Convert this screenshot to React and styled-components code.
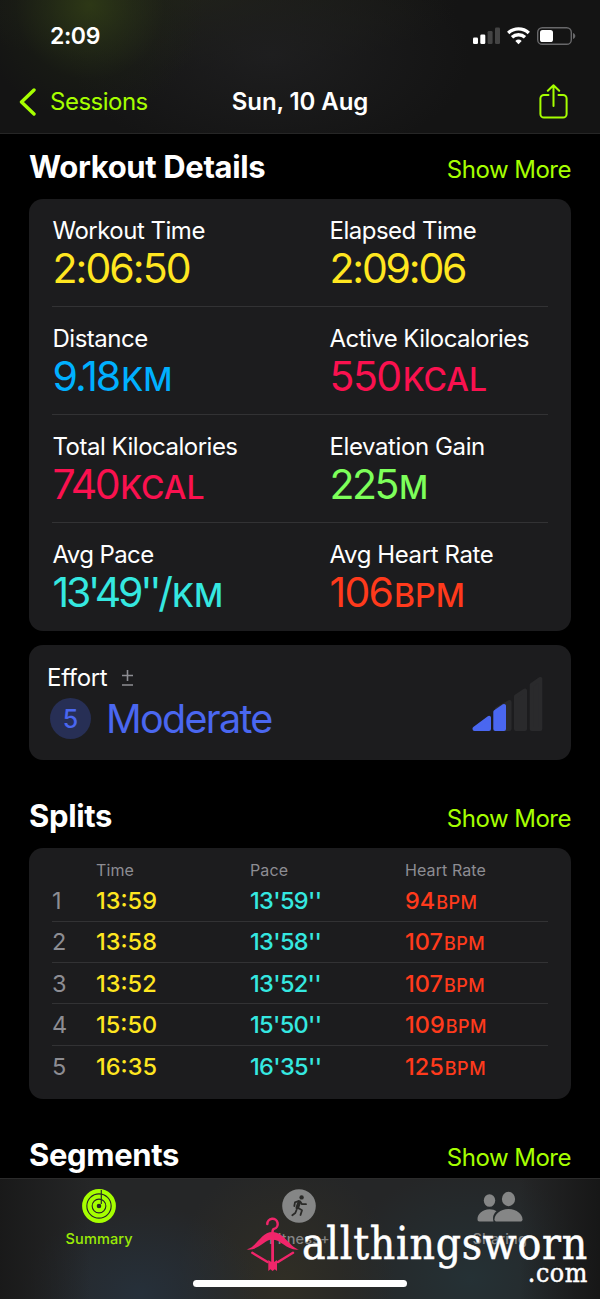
import React from "react";
import styled, { createGlobalStyle } from "styled-components";

const GlobalStyle = createGlobalStyle`
  * { box-sizing: border-box; }
  body {
    margin: 0;
    background: #000;
    font-family: Inter, "Liberation Sans", sans-serif;
    color: #fff;
  }
`;

const Screen = styled.div`
  width: 600px;
  height: 1299px;
  display: flex;
  flex-direction: column;
  overflow: hidden;
  background: #000;
`;

const TopBar = styled.header`
  height: 134px;
  flex: none;
  display: flex;
  flex-direction: column;
  border-bottom: 1px solid #262626;
  background:
    radial-gradient(circle at 90px 5px, rgba(46, 57, 22, 0.95), rgba(40, 50, 22, 0.6) 40px, rgba(30, 36, 20, 0.3) 75px, transparent 115px),
    radial-gradient(ellipse 200px 110px at 270px 55px, rgba(31, 31, 32, 0.9), transparent),
    radial-gradient(ellipse 260px 70px at 200px 0, rgba(34, 36, 24, 0.8), transparent),
    #141414;
`;

const StatusBar = styled.div`
  height: 72px;
  display: flex;
  align-items: center;
  justify-content: space-between;
  padding: 0 24px 0 50px;
`;

const Clock = styled.div`
  font-size: 23px;
  font-weight: 600;
  letter-spacing: -0.4px;
`;

const StatusIcons = styled.div`
  display: flex;
  align-items: center;
  gap: 7px;
`;

const NavBar = styled.nav`
  height: 59px;
  display: grid;
  grid-template-columns: 1fr auto 1fr;
  align-items: center;
  padding: 0 32px;
`;

const Back = styled.div`
  display: flex;
  align-items: center;
  gap: 13px;
  margin-left: -14px;
  color: #a6ff00;
  font-size: 24px;
  letter-spacing: -0.5px;
`;

const NavTitle = styled.div`
  font-size: 24px;
  font-weight: 600;
  letter-spacing: -0.1px;
`;

const Share = styled.div`
  justify-self: end;
  display: flex;
`;

const Content = styled.main`
  flex: 1;
  overflow: hidden;
  padding: 0 29px;
`;

const SectionHead = styled.div`
  height: ${(p) => p.$height}px;
  display: flex;
  align-items: baseline;
  justify-content: space-between;
  padding-top: ${(p) => p.$top}px;
`;

const Heading = styled.h2`
  margin: 0;
  font-size: 31px;
  line-height: 36px;
  font-weight: 700;
  letter-spacing: -0.35px;
`;

const ShowMore = styled.div`
  color: #a6ff00;
  font-size: 24px;
  line-height: 36px;
  letter-spacing: -0.5px;
`;

const Card = styled.section`
  background: #1c1c1e;
  border-radius: 14px;
  padding: ${(p) => p.$pad || "0 23px"};
`;

const MetricRow = styled.div`
  height: 108px;
  display: grid;
  grid-template-columns: 277px 1fr;
  padding-top: 18px;
  border-bottom: 1px solid ${(p) => (p.$last ? "transparent" : "#323234")};
`;

const Metric = styled.div`
  padding-left: 0.5px;
  white-space: nowrap;
`;

const Label = styled.div`
  font-size: 24px;
  line-height: 28px;
  letter-spacing: ${(p) => p.$ls || -0.5}px;
`;

const Value = styled.div`
  font-size: 41px;
  line-height: 46px;
  color: ${(p) => p.$color};
  letter-spacing: ${(p) => p.$ls || -1.8}px;
`;

const Unit = styled.span`
  margin-left: 2px;
  font-size: 32px;
  font-weight: 450;
  letter-spacing: 0;
`;

const SmallUnit = styled.span`
  margin-left: 1px;
  font-size: 18px;
  letter-spacing: 0.5px;
`;

const EffortCard = styled(Card)`
  height: 115px;
  margin-top: 14.5px;
  display: flex;
  justify-content: space-between;
  padding: 18px 28px 0 18px;
`;

const EffortLabel = styled.div`
  display: flex;
  align-items: center;
  gap: 14px;
  font-size: 24px;
  line-height: 30px;
  letter-spacing: -0.3px;
`;

const EffortValue = styled.div`
  display: flex;
  align-items: center;
  gap: 15px;
  height: 51px;
  padding-left: 3px;
  color: #4a67f0;
  font-size: 39.5px;
  letter-spacing: -1.7px;
`;

const Badge = styled.div`
  width: 41px;
  height: 41px;
  border-radius: 50%;
  background: #272f55;
  display: grid;
  place-items: center;
  font-size: 25px;
  font-weight: 500;
  letter-spacing: 0;
`;

const EffortChart = styled.div`
  padding-top: 14px;
`;

const SplitRow = styled.div`
  height: ${(p) => (p.$head ? 32.5 : 41.3)}px;
  display: grid;
  grid-template-columns: 44px 154px 155px 1fr;
  align-items: ${(p) => (p.$head ? "end" : "center")};
  padding-bottom: ${(p) => (p.$head ? 1 : 0)}px;
  border-bottom: ${(p) => (p.$line ? "1px solid #323234" : "none")};
  font-size: ${(p) => (p.$head ? 16 : 23.5)}px;
  letter-spacing: ${(p) => (p.$head ? 0.1 : 0)}px;
  color: #8d8d93;
  white-space: nowrap;
`;

const Cell = styled.div`
  color: ${(p) => p.$color || "inherit"};
  font-weight: ${(p) => (p.$color ? 500 : 400)};
  letter-spacing: ${(p) => p.$ls || 0}px;
`;

const TabBar = styled.footer`
  height: 121px;
  flex: none;
  position: relative;
  border-top: 1px solid #2b2b2b;
  background:
    linear-gradient(90deg, rgba(24, 24, 24, 0.9), transparent 90px, transparent 520px, rgba(22, 22, 22, 0.95)),
    radial-gradient(ellipse 120px 90px at 140px 115px, #26303a, transparent),
    radial-gradient(ellipse 110px 120px at 285px 100px, #302e25, transparent),
    radial-gradient(ellipse 130px 110px at 470px 100px, #253135, transparent),
    #252627;
`;

const Tabs = styled.div`
  display: grid;
  grid-template-columns: repeat(3, 1fr);
  padding-top: 10px;
  margin-left: -1px;
`;

const Tab = styled.div`
  display: flex;
  flex-direction: column;
  align-items: center;
  gap: 7px;
  color: ${(p) => (p.$active ? "#9bea06" : "#858686")};
  font-size: 14.5px;
  line-height: 18px;
  font-weight: 500;
  letter-spacing: 0.15px;
  svg { height: 34px; }
`;

const HomeIndicator = styled.div`
  position: absolute;
  left: 193px;
  bottom: 12px;
  width: 214px;
  height: 7px;
  border-radius: 4px;
  background: #fff;
`;

// sits over the tab labels
const Watermark = styled.div`
  position: absolute;
  left: 246px;
  top: 38px;
  width: 342px;
  display: flex;
  font-family: "DejaVu Serif Condensed", "DejaVu Serif", serif;
  font-stretch: condensed;
  -webkit-text-stroke: 0.5px #fff;
`;

const Brand = styled.div`
  flex: 1;
  display: flex;
  flex-direction: column;
  align-items: flex-end;
`;

const BrandName = styled.div`
  font-size: 44px;
  line-height: 54px;
  height: 41px;
  letter-spacing: 0.75px;
`;

const BrandDomain = styled.div`
  font-size: 26.5px;
  line-height: 30px;
  letter-spacing: 0.6px;
`;

const metrics = [
  [
    { label: "Workout Time", value: "2:06:50", color: "#ffe620", ls: -1.95 },
    { label: "Elapsed Time", value: "2:09:06", color: "#ffe620", ls: -2.2 },
  ],
  [
    { label: "Distance", value: "9.18", unit: "KM", color: "#00b0ff", ls: -2 },
    { label: "Active Kilocalories", value: "550", unit: "KCAL", color: "#fa114f", ls: -1.5, labelLs: -0.55 },
  ],
  [
    { label: "Total Kilocalories", value: "740", unit: "KCAL", color: "#fa114f", ls: -2.5 },
    { label: "Elevation Gain", value: "225", unit: "M", color: "#7dff5a", ls: -2.5, labelLs: -0.4 },
  ],
  [
    { label: "Avg Pace", value: "13'49''/", unit: "KM", color: "#35e8e0", ls: -3.2, labelLs: -0.6 },
    { label: "Avg Heart Rate", value: "106", unit: "BPM", color: "#ff3a1c", labelLs: -0.4 },
  ],
];

const splits = [
  ["13:59", "13'59''", "94"],
  ["13:58", "13'58''", "107"],
  ["13:52", "13'52''", "107"],
  ["15:50", "15'50''", "109"],
  ["16:35", "16'35''", "125"],
];

function SignalIcon() {
  return (
    <svg width="27" height="18" viewBox="0 0 27 18">
      <rect x="0" y="10.5" width="5" height="6.5" rx="1.3" fill="#fff" />
      <rect x="7.3" y="7.5" width="5" height="9.5" rx="1.3" fill="#fff" />
      <rect x="14.6" y="4" width="5" height="13" rx="1.3" fill="#444" />
      <rect x="22" y="0.5" width="5" height="16.5" rx="1.3" fill="#444" />
    </svg>
  );
}

function WifiIcon() {
  return (
    <svg width="23" height="18" viewBox="0 0 23 18" fill="none" stroke="#fff" strokeWidth="3.4">
      <path d="M1.2 5.9a15.200 15.200 0 0 1 20.600 0" />
      <path d="M5 10.300a9.600 9.600 0 0 1 13 0" />
      <path d="M11.500 17.200l-3.200-3.300a4.700 4.700 0 0 1 6.400 0z" fill="#fff" stroke="none" />
    </svg>
  );
}

function BatteryIcon() {
  return (
    <svg width="39" height="18" viewBox="0 0 39 18">
      <rect x="0.7" y="0.7" width="33.6" height="16.6" rx="4.6" fill="none" stroke="#68686a" strokeWidth="1.4" />
      <rect x="3" y="3" width="13" height="12" rx="2.6" fill="#fff" />
      <path d="M36 6v6c1.500-.6 2.300-1.700 2.300-3s-.8-2.400-2.300-3z" fill="#68686a" />
    </svg>
  );
}

function ShareIcon() {
  return (
    <svg width="29" height="36" viewBox="0 0 29 36" fill="none" stroke="#a6ff00" strokeWidth="2" strokeLinecap="round" strokeLinejoin="round">
      <path d="M9.500 11H5a3.600 3.600 0 0 0-3.600 3.600v15.300A3.600 3.600 0 0 0 5 33.500h19a3.600 3.600 0 0 0 3.600-3.600V14.600a3.600 3.600 0 0 0-3.600-3.600h-4.500" />
      <path d="M14.500 22V1.200M8.800 6.700l5.700-5.500 5.700 5.500" />
    </svg>
  );
}

function EffortIcon() {
  return (
    <svg width="71" height="56" viewBox="0 0 71 56">
      <g fill="#2a2a2c" stroke="#2a2a2c" strokeWidth="4" strokeLinejoin="round">
        <path d="M25 32L37.500 25V52H25z" />
        <path d="M44 19.500l9-6V52h-9z" />
        <path d="M59.700 8l8.600-6V52h-8.600z" />
      </g>
      <g fill="#4a67f0" stroke="#4a67f0" strokeWidth="4" strokeLinejoin="round">
        <path d="M2.500 51.500L17 40.800V52H2.500z" />
        <path d="M23.300 35l8.700-6v23h-8.700z" />
      </g>
    </svg>
  );
}

function RingsIcon() {
  return (
    <svg width="34" height="34" viewBox="0 0 34 34" fill="none" stroke="#a6ff00" strokeWidth="4.200">
      <circle cx="17" cy="17" r="14.800" />
      <circle cx="17" cy="17" r="9.500" />
      <circle cx="17" cy="17" r="4.300" strokeWidth="4" />
      <path d="M19.300 1v14" stroke="#28302a" strokeWidth="1.200" />
    </svg>
  );
}

function RunnerIcon() {
  return (
    <svg width="34" height="34" viewBox="0 0 34 34" fill="none" stroke="#2a2a28" strokeLinecap="round" strokeLinejoin="round">
      <circle cx="17" cy="17" r="16.800" fill="#858686" stroke="none" />
      <circle cx="19.600" cy="8.400" r="2.200" fill="#2a2a28" stroke="none" />
      <path d="M17.300 13.200l-2 5.500" strokeWidth="3.600" />
      <path d="M16.500 12l-3.500 1.400-.7 3.600M18.200 12.500l1.800 2.700h4M15.800 18.800l4.200 2.400-1.500 4.800M14.500 21l-1.200 3-3 2.200" strokeWidth="1.800" />
    </svg>
  );
}

function PeopleIcon() {
  return (
    <svg width="46" height="34" viewBox="0 0 46 34" fill="#858686">
      <ellipse cx="12.500" cy="11.500" rx="5.700" ry="6.300" />
      <path d="M2.500 32.500C.8 32.500.5 31.500.5 30c0-4.500 4.500-9.700 12-9.700 3.200 0 5.300.8 7 2-2.600 2.200-4.200 5.200-3 10.200z" />
      <ellipse cx="31.500" cy="10" rx="6.600" ry="7.200" />
      <path d="M20 32.500c-1.700 0-2.500-.8-2.500-2.300 0-4.500 5.500-10.200 14-10.200s14 5.700 14 10.200c0 1.500-.8 2.300-2.500 2.300z" />
    </svg>
  );
}

function HangerIcon() {
  return (
    <svg width="54" height="55" viewBox="0 0 54 55" fill="none" stroke="#f0256a" strokeLinecap="round">
      <path d="M21.300 7a5.200 5.200 0 1 1 6.700 4.900c-1.300.4-1.500 1.300-1.500 3.600" strokeWidth="2.500" />
      <path d="M.5 32.500C11 30 15 15 26.500 15S43 30 53 32.500C41 34 35 22.500 26.500 22.500S12.500 34 .5 32.500z" fill="#f0256a" stroke="none" />
      <path d="M6.300 35.800L21.500 45M47 35.800L32 45" strokeWidth="2.400" />
      <path d="M26.600 22v24" strokeWidth="2.800" strokeLinecap="butt" />
      <path d="M22.300 43l3 2h2.700l3-2v11l-2.200-1.800-2.200 1.800-2.200-1.800-2.100 1.800z" fill="#f0256a" stroke="none" />
    </svg>
  );
}

function Section({ title, height, top }) {
  return (
    <SectionHead $height={height} $top={top}>
      <Heading>{title}</Heading>
      <ShowMore>Show More</ShowMore>
    </SectionHead>
  );
}

export default function App() {
  return (
    <Screen>
      <GlobalStyle />
      <TopBar>
        <StatusBar>
          <Clock>2:09</Clock>
          <StatusIcons>
            <SignalIcon />
            <WifiIcon />
            <BatteryIcon />
          </StatusIcons>
        </StatusBar>
        <NavBar>
          <Back>
            <svg width="19" height="28" viewBox="0 0 19 28" fill="none" stroke="#a6ff00" strokeWidth="3.400" strokeLinecap="round" strokeLinejoin="round">
              <path d="M16 2L3.500 14 16 26" />
            </svg>
            Sessions
          </Back>
          <NavTitle>Sun, 10 Aug</NavTitle>
          <Share><ShareIcon /></Share>
        </NavBar>
      </TopBar>

      <Content>
        <Section title="Workout Details" height={64.5} top={14.5} />
        <Card>
          {metrics.map((row, i) => (
            <MetricRow key={i} $last={i === metrics.length - 1}>
              {row.map((m) => (
                <Metric key={m.label}>
                  <Label $ls={m.labelLs}>{m.label}</Label>
                  <Value $color={m.color} $ls={m.ls}>
                    {m.value}
                    {m.unit && <Unit>{m.unit}</Unit>}
                  </Value>
                </Metric>
              ))}
            </MetricRow>
          ))}
        </Card>

        <EffortCard>
          <div>
            <EffortLabel>
              Effort
              <svg width="13" height="18" viewBox="0 0 13 18" stroke="#8d8d93" strokeWidth="1.600">
                <path d="M6.500 1v11M1 6.500h11M1 16h11" />
              </svg>
            </EffortLabel>
            <EffortValue>
              <Badge>5</Badge>
              Moderate
            </EffortValue>
          </div>
          <EffortChart><EffortIcon /></EffortChart>
        </EffortCard>

        <Section title="Splits" height={88} top={38} />
        <Card $pad="0 23px 12px">
          <SplitRow $head>
            <span />
            <span>Time</span>
            <span>Pace</span>
            <span>Heart Rate</span>
          </SplitRow>
          {splits.map(([time, pace, bpm], i) => (
            <SplitRow key={i} $line={i < splits.length - 1}>
              <Cell>{i + 1}</Cell>
              <Cell $color="#ffe620">{time}</Cell>
              <Cell $color="#35e8e0" $ls={-0.65}>{pace}</Cell>
              <Cell $color="#ff3a1c">
                {bpm}
                <SmallUnit>BPM</SmallUnit>
              </Cell>
            </SplitRow>
          ))}
        </Card>

        <Section title="Segments" height={79} top={38.5} />
      </Content>

      <TabBar>
        <Tabs>
          <Tab $active><RingsIcon />Summary</Tab>
          <Tab><RunnerIcon />Fitness+</Tab>
          <Tab><PeopleIcon />Sharing</Tab>
        </Tabs>
        <HomeIndicator />
        <Watermark>
          <HangerIcon />
          <Brand>
            <BrandName>allthingsworn</BrandName>
            <BrandDomain>.com</BrandDomain>
          </Brand>
        </Watermark>
      </TabBar>
    </Screen>
  );
}
